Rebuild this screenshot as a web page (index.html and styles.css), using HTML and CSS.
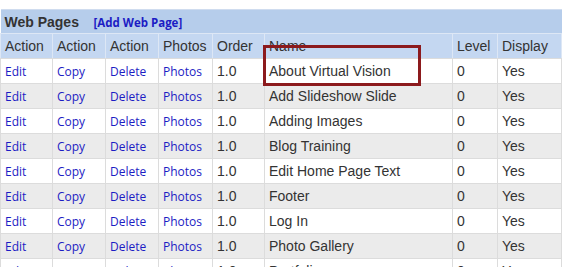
FILE: index.html
```html
<!DOCTYPE html>
<html lang="en">
<head>
    <meta charset="UTF-8">
    <title>Web Pages</title>
    <link rel="stylesheet" href="styles.css">
</head>
<body>

<div class="wrap">
    <table class="pages">
        <colgroup>
            <col class="c-act"><col class="c-act2"><col class="c-act2"><col class="c-photo">
            <col class="c-order"><col class="c-name"><col class="c-level"><col class="c-display">
        </colgroup>
        <thead>
            <tr class="title-row">
                <td colspan="8"><span class="title">Web Pages</span><a href="#" class="add-link">[Add Web Page]</a></td>
            </tr>
            <tr class="head-row">
                <th>Action</th><th>Action</th><th>Action</th><th>Photos</th>
                <th>Order</th><th>Name</th><th>Level</th><th>Display</th>
            </tr>
        </thead>
        <tbody>
            <tr><td><a href="#">Edit</a></td><td><a href="#">Copy</a></td><td><a href="#">Delete</a></td><td><a href="#">Photos</a></td><td>1.0</td><td>About Virtual Vision</td><td>0</td><td>Yes</td></tr>
            <tr><td><a href="#">Edit</a></td><td><a href="#">Copy</a></td><td><a href="#">Delete</a></td><td><a href="#">Photos</a></td><td>1.0</td><td>Add Slideshow Slide</td><td>0</td><td>Yes</td></tr>
            <tr><td><a href="#">Edit</a></td><td><a href="#">Copy</a></td><td><a href="#">Delete</a></td><td><a href="#">Photos</a></td><td>1.0</td><td>Adding Images</td><td>0</td><td>Yes</td></tr>
            <tr><td><a href="#">Edit</a></td><td><a href="#">Copy</a></td><td><a href="#">Delete</a></td><td><a href="#">Photos</a></td><td>1.0</td><td>Blog Training</td><td>0</td><td>Yes</td></tr>
            <tr><td><a href="#">Edit</a></td><td><a href="#">Copy</a></td><td><a href="#">Delete</a></td><td><a href="#">Photos</a></td><td>1.0</td><td>Edit Home Page Text</td><td>0</td><td>Yes</td></tr>
            <tr><td><a href="#">Edit</a></td><td><a href="#">Copy</a></td><td><a href="#">Delete</a></td><td><a href="#">Photos</a></td><td>1.0</td><td>Footer</td><td>0</td><td>Yes</td></tr>
            <tr><td><a href="#">Edit</a></td><td><a href="#">Copy</a></td><td><a href="#">Delete</a></td><td><a href="#">Photos</a></td><td>1.0</td><td>Log In</td><td>0</td><td>Yes</td></tr>
            <tr><td><a href="#">Edit</a></td><td><a href="#">Copy</a></td><td><a href="#">Delete</a></td><td><a href="#">Photos</a></td><td>1.0</td><td>Photo Gallery</td><td>0</td><td>Yes</td></tr>
            <tr><td><a href="#">Edit</a></td><td><a href="#">Copy</a></td><td><a href="#">Delete</a></td><td><a href="#">Photos</a></td><td>1.0</td><td>Portfolio</td><td>0</td><td>Yes</td></tr>
        </tbody>
    </table>
    <div class="highlight"></div>
</div>

</body>
</html>
```

FILE: styles.css
```css
body {
    margin: 0;
    padding: 0;
    background-color: #ffffff;
    font-family: "Liberation Sans", Arial, sans-serif;
    overflow: hidden;
}
.wrap {
    position: relative;
    padding-top: 9px;
}
.pages {
    border-collapse: collapse;
    table-layout: fixed;
    width: 561px;
    font-size: 14px;
    color: #333333;
}
.c-act { width: 52px; }
.c-act2 { width: 53px; }
.c-photo { width: 54px; }
.c-order { width: 52px; }
.c-name { width: 188px; }
.c-level { width: 45px; }
.c-display { width: 64px; }
.pages td,
.pages th {
    height: 24px;
    padding: 0 4px;
    border: 1px solid #dcdcdc;
    text-align: left;
    white-space: nowrap;
    overflow: hidden;
}
.pages tbody tr:nth-child(odd) td {
    background-color: #ffffff;
}
.pages tbody tr:nth-child(even) td {
    background-color: #ebebeb;
}
.pages a {
    font-family: "Open Sans", "DejaVu Sans", sans-serif;
    font-size: 12px;
    font-weight: 500;
    color: #1c1cc4;
    text-decoration: none;
}
.title-row td {
    background-color: #b6cdeb;
    border: none;
    border-top: 1px solid #cfdcef;
    height: 23px;
}
.title {
    font-weight: bold;
    display: inline-block;
    width: 89px;
}
.pages .add-link {
    font-weight: bold;
    font-size: 11.5px;
}
.head-row th {
    background-color: #c4d7f1;
    font-weight: normal;
    border: 1px solid #dde7f5;
    border-bottom-color: #dcdcdc;
}
.highlight {
    position: absolute;
    left: 263px;
    top: 45px;
    width: 152px;
    height: 35px;
    border: 3px solid #8c1a1d;
}
```
